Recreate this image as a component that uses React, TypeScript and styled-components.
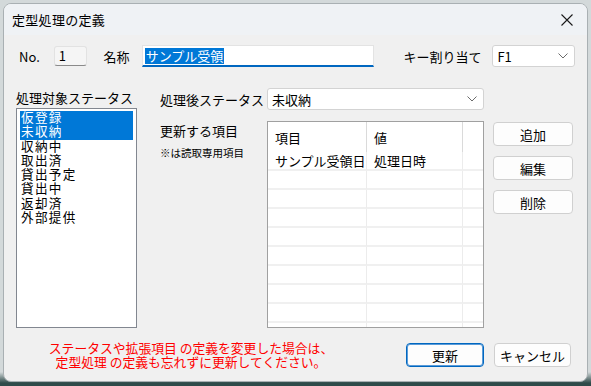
import React from "react";
import styled, { createGlobalStyle } from "styled-components";

const Global = createGlobalStyle`
  html, body { margin: 0; padding: 0; }
  body {
    width: 591px; height: 386px; overflow: hidden;
    background: linear-gradient(to bottom, #d3d9da 0, #d3d9da 372px, #2f4b4a 383px, #2f4b4a 386px);
    font-family: "Noto Sans CJK JP", "Noto Sans", sans-serif;
    color: #000;
  }
  * { box-sizing: border-box; }
`;

const Outer = styled.div`
  padding: 3px 3px 0 3px;
`;

const Window = styled.div`
  width: 585px;
  height: 379px;
  background: #f0f0f0;
  border: 1px solid #a9b0b3;
  border-radius: 8px;
  overflow: hidden;
  display: flex;
  flex-direction: column;
`;

const TitleBar = styled.div`
  height: 31px;
  flex: none;
  display: flex;
  align-items: center;
  justify-content: space-between;
  padding: 0 14px 0 8px;
  background: #eff2f5;
`;

const Title = styled.span`
  font-size: 13px;
  letter-spacing: 0.3px;
`;

const CloseIcon = styled.svg`
  width: 12px;
  height: 12px;
`;

const Body = styled.div`
  flex: 1;
  display: flex;
  flex-direction: column;
  padding: 10px 12px 0 12px;
`;

const TopRow = styled.div`
  display: flex;
  align-items: center;
  height: 22px;
`;

const Label = styled.span<{ $ml?: number; $w?: number }>`
  font-size: 13px;
  white-space: nowrap;
  margin-left: ${(p) => p.$ml ?? 0}px;
  ${(p) => (p.$w ? `width: ${p.$w}px;` : "")}
`;

const NoBox = styled.div`
  width: 33px;
  height: 20px;
  margin-left: 14px;
  background: #f5f5f5;
  border: 1px solid #e2e2e2;
  border-bottom: 1px solid #8a8a8a;
  border-radius: 3px;
  font-size: 13px;
  line-height: 18px;
  padding-left: 4px;
`;

const NameInput = styled.div`
  width: 234px;
  height: 22px;
  margin-left: 12px;
  background: #fff;
  border: 1px solid #e3e3e3;
  border-bottom: 2px solid #0067c0;
  padding: 0 0 0 2px;
  display: flex;
  align-items: center;
`;

const Selected = styled.span`
  background: #0078d7;
  color: #fff;
  font-size: 13px;
  line-height: 16px;
  height: 16px;
  display: inline-flex;
  align-items: center;
  padding: 0 1px;
`;

const Combo = styled.div<{ $w: number }>`
  width: ${(p) => p.$w}px;
  height: 22px;
  background: #fff;
  border: 1px solid #d3d3d3;
  border-radius: 3px;
  display: flex;
  align-items: center;
  justify-content: space-between;
  padding: 0 6px 0 4px;
  font-size: 13px;
`;

const Chevron = () => (
  <svg width="10" height="6" viewBox="0 0 10 6">
    <path d="M0.5 0.5 L5 5 L9.5 0.5" fill="none" stroke="#6b6b6b" strokeWidth="1" />
  </svg>
);

const Main = styled.div`
  display: flex;
  margin-top: 21px;
`;

const LeftCol = styled.div`
  width: 121px;
  display: flex;
  flex-direction: column;
`;

const ListLabel = styled.div`
  font-size: 13px;
  line-height: 14px;
  margin-top: 3px;
  white-space: nowrap;
`;

const ListBox = styled.div`
  margin-top: 3px;
  height: 220px;
  background: #fff;
  border: 1px solid #828790;
  padding: 2px 3px;
  display: flex;
  flex-direction: column;
`;

const ListItem = styled.div<{ $sel?: boolean }>`
  font-family: "Liberation Sans", "Noto Sans CJK JP", sans-serif;
  font-size: 12.6px;
  letter-spacing: 1.3px;
  line-height: 14.3px;
  height: 14.3px;
  padding-left: 1px;
  background: ${(p) => (p.$sel ? "#0078d7" : "transparent")};
  color: ${(p) => (p.$sel ? "#fff" : "#000")};
`;

const RightArea = styled.div`
  margin-left: 23px;
  display: flex;
  flex-direction: column;
`;

const StatusRow = styled.div`
  display: flex;
  align-items: center;
  height: 22px;
`;

const ItemsRow = styled.div`
  display: flex;
  margin-top: 11px;
`;

const ItemsLabels = styled.div`
  width: 107px;
  display: flex;
  flex-direction: column;
`;

const Note = styled.span`
  font-size: 10.5px;
  margin-top: 5px;
  white-space: nowrap;
`;

const Table = styled.div`
  width: 217px;
  height: 207px;
  background: #fff;
  border: 1px solid #a0a0a0;
  display: grid;
  grid-template-columns: 99px 96px 1fr;
  grid-auto-rows: 19px;
  grid-template-rows: 30px;
  align-content: start;
  overflow: hidden;
`;

const Cell = styled.div<{ $head?: boolean; $last?: boolean }>`
  font-size: 13px;
  padding-left: 7px;
  display: flex;
  align-items: center;
  border-right: 1px solid ${(p) => (p.$head ? "#dadada" : "#ececec")};
  border-bottom: ${(p) => (p.$head ? "none" : "2px solid #f0f0f0")};
  white-space: nowrap;
  ${(p) => (p.$last ? "border-right: none;" : "")}
`;

const ButtonCol = styled.div`
  margin-left: 9px;
  display: flex;
  flex-direction: column;
  gap: 10px;
  padding-top: 1px;
`;

const Button = styled.button<{ $primary?: boolean; $w?: number }>`
  width: ${(p) => p.$w ?? 80}px;
  height: 24px;
  background: #fdfdfd;
  border: 1px solid ${(p) => (p.$primary ? "#0067c0" : "#d0d0d0")};
  ${(p) => (p.$primary ? "box-shadow: inset 0 0 0 1px #5a9bd8;" : "")}
  border-radius: 4px;
  font-family: "Noto Sans CJK JP", sans-serif;
  font-size: 13px;
  color: #000;
  padding: 0;
`;

const Footer = styled.div`
  display: flex;
  align-items: center;
  margin-top: 13px;
`;

const Message = styled.div`
  width: 350px;
  color: #ff0000;
  font-size: 12.8px;
  line-height: 14px;
  text-align: center;
  white-space: pre;
`;

const FooterButtons = styled.div`
  margin-left: 40px;
  display: flex;
  gap: 10px;
`;

const statuses = ["仮登録", "未収納", "収納中", "取出済", "貸出予定", "貸出中", "返却済", "外部提供"];

export default function App() {
  const rows = Array.from({ length: 9 });
  return (
    <>
      <Global />
      <Outer>
        <Window>
          <TitleBar>
            <Title>定型処理の定義</Title>
            <CloseIcon viewBox="0 0 12 12">
              <path d="M0.5 0.5 L11.5 11.5 M11.5 0.5 L0.5 11.5" stroke="#1a1a1a" strokeWidth="1.1" />
            </CloseIcon>
          </TitleBar>
          <Body>
            <TopRow>
              <Label $ml={3}>No.</Label>
              <NoBox>1</NoBox>
              <Label $ml={17}>名称</Label>
              <NameInput>
                <Selected>サンプル受領</Selected>
              </NameInput>
              <Label $ml={29}>キー割り当て</Label>
              <Combo $w={83} style={{ marginLeft: 11 }}>
                F1
                <Chevron />
              </Combo>
            </TopRow>
            <Main>
              <LeftCol>
                <ListLabel>処理対象ステータス</ListLabel>
                <ListBox>
                  {statuses.map((s, i) => (
                    <ListItem key={s} $sel={i < 2}>
                      {s}
                    </ListItem>
                  ))}
                </ListBox>
              </LeftCol>
              <RightArea>
                <StatusRow>
                  <Label $w={107}>処理後ステータス</Label>
                  <Combo $w={217}>
                    未収納
                    <Chevron />
                  </Combo>
                </StatusRow>
                <ItemsRow>
                  <ItemsLabels>
                    <Label>更新する項目</Label>
                    <Note>※は読取専用項目</Note>
                  </ItemsLabels>
                  <Table>
                    <Cell $head>項目</Cell>
                    <Cell $head>値</Cell>
                    <Cell $head $last />
                    <Cell>サンプル受領日</Cell>
                    <Cell>処理日時</Cell>
                    <Cell $last />
                    {rows.map((_, i) => (
                      <React.Fragment key={i}>
                        <Cell />
                        <Cell />
                        <Cell $last />
                      </React.Fragment>
                    ))}
                  </Table>
                  <ButtonCol>
                    <Button>追加</Button>
                    <Button>編集</Button>
                    <Button>削除</Button>
                  </ButtonCol>
                </ItemsRow>
              </RightArea>
            </Main>
            <Footer>
              <Message>{"ステータスや拡張項目 の定義を変更した場合は、\n定型処理 の定義も忘れずに更新してください。"}</Message>
              <FooterButtons>
                <Button $primary $w={78}>更新</Button>
                <Button $w={77}>キャンセル</Button>
              </FooterButtons>
            </Footer>
          </Body>
        </Window>
      </Outer>
    </>
  );
}
